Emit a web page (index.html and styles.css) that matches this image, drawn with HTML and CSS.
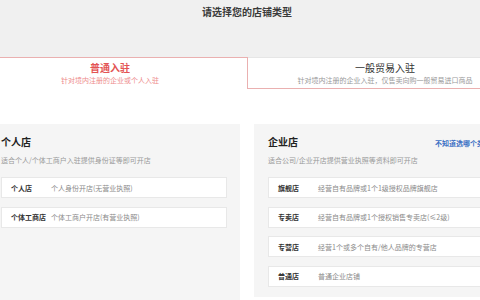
FILE: index.html
```html
<!DOCTYPE html>
<html lang="zh-CN">
<head>
<meta charset="utf-8">
<title>请选择您的店铺类型</title>
<link rel="stylesheet" href="styles.css">
</head>
<body>
<div class="page">
  <header class="header">
    <h1 class="title">请选择您的店铺类型</h1>
  </header>
  <nav class="tabs">
    <div class="tab active">
      <div class="tab-title">普通入驻</div>
      <div class="tab-sub">针对境内注册的企业或个人入驻</div>
    </div>
    <div class="tab">
      <div class="tab-title">一般贸易入驻</div>
      <div class="tab-sub">针对境内注册的企业入驻，仅售卖向购一般贸易进口商品</div>
    </div>
  </nav>
  <main class="panels">
    <section class="panel panel-personal">
      <div class="panel-head">
        <h2 class="panel-title">个人店</h2>
      </div>
      <p class="panel-sub">适合个人/个体工商户入驻提供身份证等即可开店</p>
      <ul class="rows">
        <li class="row"><span class="row-label">个人店</span><span class="row-desc">个人身份开店(无营业执照)</span></li>
        <li class="row"><span class="row-label">个体工商店</span><span class="row-desc">个体工商户开店(有营业执照)</span></li>
      </ul>
    </section>
    <section class="panel panel-company">
      <div class="panel-head">
        <h2 class="panel-title">企业店</h2>
        <a class="help-link" href="#">不知道选哪个类型？</a>
      </div>
      <p class="panel-sub">适合公司/企业开店提供营业执照等资料即可开店</p>
      <ul class="rows">
        <li class="row"><span class="row-label">旗舰店</span><span class="row-desc">经营自有品牌或1个1级授权品牌旗舰店</span></li>
        <li class="row"><span class="row-label">专卖店</span><span class="row-desc">经营自有品牌或1个授权销售专卖店(≤2级)</span></li>
        <li class="row"><span class="row-label">专营店</span><span class="row-desc">经营1个或多个自有/他人品牌的专营店</span></li>
        <li class="row"><span class="row-label">普通店</span><span class="row-desc">普通企业店铺</span></li>
      </ul>
    </section>
  </main>
</div>
</body>
</html>
```

FILE: styles.css
```css
* { box-sizing: border-box; }

html, body {
  margin: 0;
  padding: 0;
  background: #ffffff;
}

body {
  font-family: "Noto Sans CJK SC", "Noto Sans", sans-serif;
  color: #333;
}

.page {
  width: 480px;
  height: 300px;
  overflow: hidden;
}

.header {
  background: #f0f0f0;
  height: 57px;
  padding-top: 5px;
}

.title {
  margin: 0;
  text-align: center;
  font-size: 10px;
  line-height: 14px;
  font-weight: 700;
  color: #3a3a3a;
  padding-left: 14px;
}

.tabs {
  display: flex;
  height: 32px;
  background: #f0f0f0;
}

.tab {
  flex: 0 0 274px;
  height: 32px;
  background: #fff;
  border-top: 1px solid #e6e6e6;
  border-bottom: 1px solid #eab0b0;
  padding-top: 3px;
  text-align: center;
}

.tab.active {
  flex: 0 0 248px;
  border-top: 1px solid #eab0b0;
  border-right: 1px solid #eab0b0;
  border-bottom: none;
  padding-right: 27px;
}

.tab-title {
  font-size: 10px;
  line-height: 13px;
  color: #333;
}

.tab.active .tab-title {
  color: #e35454;
  font-weight: 700;
}

.tab-sub {
  margin-top: 1px;
  font-size: 7px;
  line-height: 10px;
  color: #999;
  white-space: nowrap;
}

.tab.active .tab-sub {
  color: #ee8c8c;
}

.panels {
  display: flex;
  align-items: flex-start;
  gap: 14px;
  margin-top: 35px;
}

.panel {
  background: #f5f5f5;
  padding-top: 12px;
}

.panel-personal {
  flex: 0 0 240px;
  height: 190px;
  padding-left: 1px;
  padding-right: 13px;
}

.panel-company {
  flex: 0 0 258px;
  height: 173px;
  padding-left: 14px;
  padding-right: 14px;
}

.panel-head {
  display: flex;
  justify-content: space-between;
  align-items: baseline;
}

.panel-title {
  margin: 0;
  font-size: 10px;
  line-height: 12px;
  font-weight: 700;
  color: #222;
}

.help-link {
  font-size: 7px;
  font-weight: 700;
  color: #3a6fc4;
  text-decoration: none;
  white-space: nowrap;
}

.panel-sub {
  margin: 7px 0 0;
  font-size: 7px;
  line-height: 10px;
  color: #999;
  white-space: nowrap;
}

.rows {
  list-style: none;
  margin: 12px 0 0;
  padding: 0;
  display: flex;
  flex-direction: column;
  gap: 8.5px;
}

.row {
  height: 21px;
  background: #fff;
  border: 1px solid #e8e8e8;
  display: flex;
  align-items: center;
  padding-left: 9px;
  font-size: 7px;
  white-space: nowrap;
}

.row-label {
  flex: 0 0 40px;
  font-weight: 700;
  color: #333;
}

.row-desc {
  color: #8a8a8a;
}
```
